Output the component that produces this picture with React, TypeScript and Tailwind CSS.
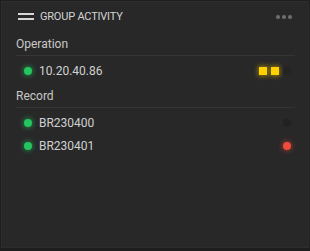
import React from 'react';

type Row = { name: string; status: 'ops' | 'off' | 'alert' };

const Dot: React.FC = () => (
  <span className="w-[8px] h-[8px] rounded-full bg-[#22c55e] shadow-[0_0_5px_1px_rgba(34,197,94,0.55)]" />
);

const Section: React.FC<{ title: string; rows: Row[] }> = ({ title, rows }) => (
  <div>
    <div className="h-[22px] flex items-center text-[12px] text-[#c8c8c8]">{title}</div>
    <div className="h-px bg-[#353535] mr-[13px]" />
    <div className="pt-[3px] pb-[3px]">
      {rows.map((r) => (
        <div key={r.name} className="h-[23px] flex items-center pl-[8px] pr-[17px]">
          <Dot />
          <span className="ml-[7px] text-[12px] text-[#d0d0d0] flex-1">{r.name}</span>
          {r.status === 'ops' && (
            <div className="flex items-center gap-[4px]">
              <span className="w-[8px] h-[8px] bg-[#ffd000] shadow-[0_0_5px_1px_rgba(255,208,0,0.5)]" />
              <span className="w-[8px] h-[8px] bg-[#ffd000] shadow-[0_0_5px_1px_rgba(255,208,0,0.5)]" />
              <span className="w-[8px] h-[8px] bg-[#242424]" />
            </div>
          )}
          {r.status === 'off' && <span className="w-[8px] h-[8px] rounded-full bg-[#222222]" />}
          {r.status === 'alert' && (
            <span className="w-[8px] h-[8px] rounded-full bg-[#f04a3a] shadow-[0_0_5px_1px_rgba(240,74,58,0.5)]" />
          )}
        </div>
      ))}
    </div>
  </div>
);

export default function App() {
  return (
    <div className="w-[310px] h-[251px] bg-[#1e1e1e] pt-[1px] pl-[1px]" style={{ fontFamily: 'Roboto, "Liberation Sans", sans-serif' }}>
      <div className="w-[308px] h-[247px] bg-[#282828] border border-[#2d2d2d]">
        {/* Header */}
        <div className="h-[30px] flex items-center pl-[16px] pr-[16px]">
          <svg width="16" height="8" viewBox="0 0 16 8" className="mr-[6px]">
            <rect x="0" y="0" width="16" height="2" fill="#d6d6d6" />
            <rect x="0" y="5" width="16" height="2" fill="#d6d6d6" />
          </svg>
          <span className="text-[11px] text-[#d4d4d4] flex-1 tracking-[-0.2px]">GROUP ACTIVITY</span>
          <div className="flex gap-[2px]">
            <span className="w-[4px] h-[4px] rounded-full bg-[#6f6f6f]" />
            <span className="w-[4px] h-[4px] rounded-full bg-[#6f6f6f]" />
            <span className="w-[4px] h-[4px] rounded-full bg-[#6f6f6f]" />
          </div>
        </div>
        <div className="pl-[14px] pt-[1px]">
          <Section title="Operation" rows={[{ name: '10.20.40.86', status: 'ops' }]} />
          <Section
            title="Record"
            rows={[
              { name: 'BR230400', status: 'off' },
              { name: 'BR230401', status: 'alert' },
            ]}
          />
        </div>
      </div>
    </div>
  );
}
